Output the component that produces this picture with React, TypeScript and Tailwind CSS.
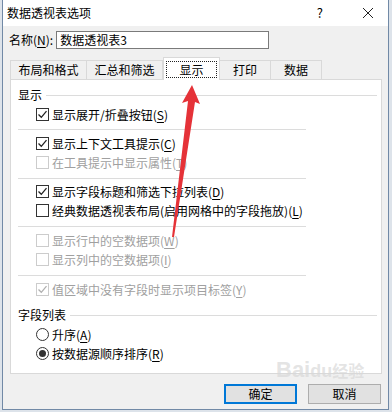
import React from 'react';

const font = { fontFamily: '"Noto Sans CJK SC", "Noto Sans", sans-serif' };

interface CheckRowProps {
  label: string;
  keyChar: string;
  checked?: boolean;
  disabled?: boolean;
}

const Key: React.FC<{ k: string }> = ({ k }) => (
  <span>
    (<span className="underline underline-offset-2">{k}</span>)
  </span>
);

const CheckRow: React.FC<CheckRowProps> = ({ label, keyChar, checked, disabled }) => (
  <div className={`flex items-center h-[19px] pl-[18px] ${disabled ? 'text-[#a0a0a0]' : 'text-black'}`}>
    <div
      className={`w-[13px] h-[13px] border bg-white flex items-center justify-center ${
        disabled ? 'border-[#cccccc]' : 'border-[#333333]'
      }`}
    >
      {checked && (
        <svg width="11" height="11" viewBox="0 0 11 11">
          <path
            d="M1.5 5.5 L4.3 8.3 L9.5 2.2"
            fill="none"
            stroke={disabled ? '#b0b0b0' : '#222222'}
            strokeWidth="1.3"
          />
        </svg>
      )}
    </div>
    <span className="ml-[3px]">
      {label}
      <Key k={keyChar} />
    </span>
  </div>
);

const RadioRow: React.FC<{ label: string; keyChar: string; selected?: boolean }> = ({
  label,
  keyChar,
  selected
}) => (
  <div className="flex items-center h-[19px] pl-[18px]">
    <div className="w-[13px] h-[13px] rounded-full border border-[#333333] bg-white flex items-center justify-center">
      {selected && <div className="w-[7px] h-[7px] rounded-full bg-[#333333]" />}
    </div>
    <span className="ml-[3px]">
      {label}
      <Key k={keyChar} />
    </span>
  </div>
);

const Sep: React.FC<{ mt: string; mb: string }> = ({ mt, mb }) => (
  <div className={`h-px w-[288px] bg-[#dcdcdc] ${mt} ${mb}`} />
);

const GroupLabel: React.FC<{ text: string }> = ({ text }) => (
  <div className="flex items-center h-[16px]">
    <span>{text}</span>
    <div className="flex-1 h-px bg-[#dcdcdc] ml-[4px] mr-[4px]" />
  </div>
);

const tabs = [
  { name: '布局和格式', w: 'w-[77px]' },
  { name: '汇总和筛选', w: 'w-[77px]' },
  { name: '显示', w: 'w-[57px]', active: true },
  { name: '打印', w: 'w-[52px]' },
  { name: '数据', w: 'w-[52px]' }
];

const App: React.FC = () => {
  return (
    <div className="relative w-[392px] h-[412px] bg-[#dde3ea] overflow-hidden text-[12px] text-black" style={font}>
      <div className="ml-[2px] w-[387px] h-[410px] border-l border-r border-b border-[#7189a6] bg-[#f0f0f0] flex flex-col">
        {/* title bar */}
        <div className="h-[26px] bg-white flex items-center pl-[4px] shrink-0">
          <span className="text-[12px]">数据透视表选项</span>
          <span className="ml-auto mr-[39px] text-[13px]">?</span>
          <svg width="12" height="12" viewBox="0 0 12 12" className="mr-[14px]">
            <path d="M1 1 L11 11 M11 1 L1 11" stroke="#222" strokeWidth="1" />
          </svg>
        </div>

        {/* name */}
        <div className="flex items-center mt-[5px] pl-[6px] h-[18px]">
          <span>
            名称(<span className="underline underline-offset-2">N</span>):
          </span>
          <div className="ml-[3px] w-[213px] h-[18px] border border-[#7a7a7a] bg-white flex items-center pl-[3px]">
            数据透视表3
          </div>
        </div>

        {/* tabs */}
        <div className="flex items-end mt-[8px] pl-[7px] h-[22px]">
          {tabs.map((t) =>
            t.active ? (
              <div
                key={t.name}
                className={`${t.w} h-[23px] -mb-px bg-white border border-b-0 border-[#d9d9d9] flex items-center justify-center relative z-10`}
              >
                <span className="border border-dotted border-[#222] px-[12px] leading-[15px]">{t.name}</span>
              </div>
            ) : (
              <div
                key={t.name}
                className={`${t.w} h-[19px] bg-[#f0f0f0] border border-b-0 border-[#d9d9d9] -ml-px first:ml-0 flex items-center justify-center`}
              >
                {t.name}
              </div>
            )
          )}
        </div>

        {/* panel */}
        <div className="ml-[7px] w-[372px] h-[295px] bg-white border border-[#d9d9d9] pl-[7px] pt-[7px]">
          <GroupLabel text="显示" />
          <div className="mt-[2px]" />
          <CheckRow label="显示展开/折叠按钮" keyChar="S" checked />
          <Sep mt="mt-[5px]" mb="mb-[4px]" />
          <CheckRow label="显示上下文工具提示" keyChar="C" checked />
          <CheckRow label="在工具提示中显示属性" keyChar="T" disabled />
          <Sep mt="mt-[6px]" mb="mb-[3px]" />
          <CheckRow label="显示字段标题和筛选下拉列表" keyChar="D" checked />
          <CheckRow label="经典数据透视表布局(启用网格中的字段拖放)" keyChar="L" />
          <Sep mt="mt-[6px]" mb="mb-[4px]" />
          <CheckRow label="显示行中的空数据项" keyChar="W" disabled />
          <CheckRow label="显示列中的空数据项" keyChar="I" disabled />
          <Sep mt="mt-[6px]" mb="mb-[4px]" />
          <CheckRow label="值区域中没有字段时显示项目标签" keyChar="Y" checked disabled />
          <div className="mt-[8px]">
            <GroupLabel text="字段列表" />
          </div>
          <div className="mt-[2px]" />
          <RadioRow label="升序" keyChar="A" />
          <RadioRow label="按数据源顺序排序" keyChar="R" selected />
        </div>

        {/* buttons */}
        <div className="flex justify-end gap-[11px] mt-[10px] pr-[7px]">
          <button className="w-[73px] h-[20px] border-2 border-[#0078d7] bg-[#e1e1e1] flex items-center justify-center">
            确定
          </button>
          <button className="w-[73px] h-[20px] border border-[#adadad] bg-[#e1e1e1] flex items-center justify-center">
            取消
          </button>
        </div>
      </div>

      {/* watermark */}
      <div
        className="absolute left-[276px] top-[358px] text-[22px] leading-[24px] font-bold text-[#d8d8d8]/70 pointer-events-none"
        style={{ fontFamily: '"Liberation Sans", sans-serif' }}
      >
        Bai<span className="text-[18px]">du</span>
        <span className="text-[16px]" style={font}>经验</span>
      </div>

      {/* red annotation arrow */}
      <svg className="absolute left-0 top-0 pointer-events-none" width="392" height="412" viewBox="0 0 392 412">
        <polygon
          points="192,85 200,104 195,102 174,237 172,237 188,101 182,103"
          fill="#e53238"
        />
      </svg>
    </div>
  );
};

export default App;
